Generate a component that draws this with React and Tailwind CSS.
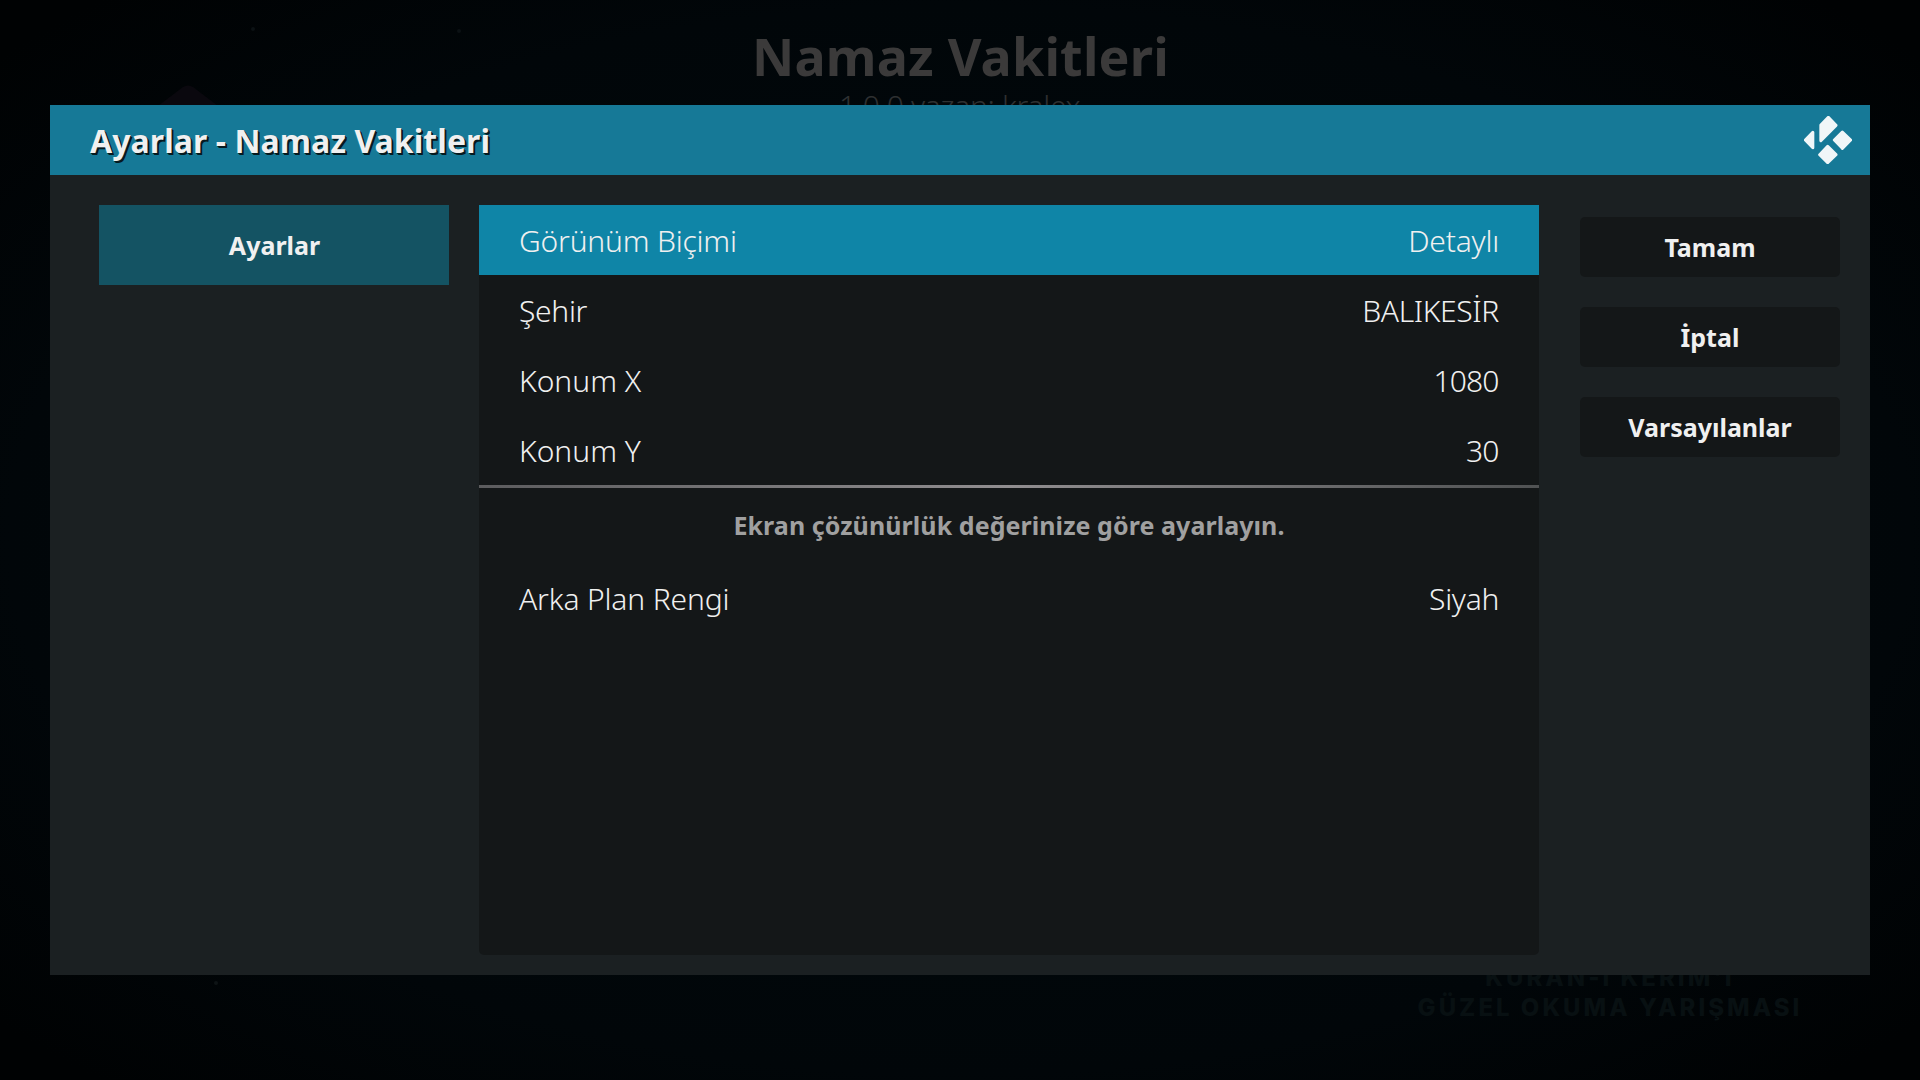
const SETTINGS = [
  { label: "Görünüm Biçimi", value: "Detaylı", active: true, labelClass: "tracking-[-0.2px]", valueClass: "tracking-[-0.2px]" },
  { label: "Şehir", value: "BALIKESİR", labelClass: "tracking-[-0.3px]", valueClass: "tracking-[-0.35px]" },
  { label: "Konum X", value: "1080", valueClass: "mr-[0.5px] tracking-[-0.9px]" },
  { label: "Konum Y", value: "30", valueClass: "mr-[0.5px] tracking-[-0.9px]" },
];

const ACTIONS = ["Tamam", "İptal", "Varsayılanlar"];

function KodiLogo() {
  return (
    <svg
      viewBox="0 0 144 144"
      className="h-12 w-12 fill-[#f0f6f8] stroke-[#f0f6f8]"
      strokeWidth="9"
      strokeLinejoin="round"
      aria-label="Kodi"
    >
      <path d="M73 4 L96 28 L50.5 74 V27 Z" />
      <path d="M4 72 L26.500 49 V95 Z" />
      <path d="M115 48 L140 72 L115 97 L91 72 Z" />
      <path d="M71 91 L96 116 L71 140 L47 116 Z" />
    </svg>
  );
}

function SettingRow({ label, value, active, labelClass, valueClass }) {
  return (
    <div
      className={
        active
          ? "flex h-[70px] items-center justify-between bg-[#0f85a7] px-10 pt-0.5"
          : "flex h-[70px] items-center justify-between px-10 pt-0.5"
      }
    >
      <span className={labelClass}>{label}</span>
      <span className={valueClass}>{value}</span>
    </div>
  );
}

function Backdrop() {
  return (
    <div className="absolute inset-0 overflow-hidden bg-[radial-gradient(ellipse_at_center,#01080b_40%,#010609_70%,#000203_95%)]">
      <svg className="absolute inset-0 h-full w-full" viewBox="0 0 1920 1080">
        <path d="M158 106 L183 87 Q188 84 193 87 L218 106 Z" fill="#0a080e" />
        <circle cx="253" cy="29" r="2" fill="#0b1114" />
        <circle cx="459" cy="31" r="2" fill="#0b1114" />
        <circle cx="216" cy="983" r="2" fill="#0d1315" />
      </svg>
      <h1 className="absolute top-[30px] left-[752px] text-[52px] leading-[52px] font-bold tracking-[0.2px] whitespace-nowrap text-[#3b3a3a]">
        Namaz Vakitleri
      </h1>
      <p className="absolute top-[91px] left-[839px] text-[30px] leading-[30px] font-light tracking-[-0.3px] whitespace-nowrap text-[#2e3031]">
        1.0.0 yazan: kralex
      </p>
      <div className="absolute top-[963px] left-[1400px] w-[420px] text-center font-[Inter,sans-serif] text-[24px] leading-[30px] font-extrabold tracking-[3px] whitespace-nowrap text-[#081012]">
        <p>KURAN-I KERİM&apos;İ</p>
        <p>GÜZEL OKUMA YARIŞMASI</p>
      </div>
    </div>
  );
}

export default function App() {
  return (
    <div className="relative flex h-[1080px] w-[1920px] overflow-hidden bg-black px-[50px] pt-[105px] font-['Noto_Sans',sans-serif]">
      <Backdrop />
      <section className="relative flex h-[870px] w-[1820px] flex-col bg-[#1b2022]">
        <header className="flex h-[70px] shrink-0 items-center justify-between bg-[#167997] pr-[18px] pl-10">
          <h2 className="pt-0.5 text-[32px] leading-[44px] font-bold tracking-[0.06px] text-[#f0f0f0] [text-shadow:1px_1px_0_#061a20,2px_2px_0_#061a20]">
            Ayarlar - Namaz Vakitleri
          </h2>
          <KodiLogo />
        </header>
        <div className="flex pt-[30px] pl-[49px]">
          <nav className="w-[350px]">
            <button className="flex h-20 w-full items-center justify-center bg-[#145363] pt-0.5 pl-px text-[25px] font-bold text-[#f0f0f0]">
              Ayarlar
            </button>
          </nav>
          <main className="ml-[30px] h-[750px] w-[1060px] rounded-b-[5px] bg-[#141718] text-[30px] leading-[42px] font-light text-[#f0f0f0]">
            {SETTINGS.map((s) => (
              <SettingRow key={s.label} {...s} />
            ))}
            <div className="h-[3px] bg-linear-to-r from-[#5c5c5e] via-[#918e90] to-[#505253]" />
            <p className="flex h-[75px] items-center justify-center pb-0.5 text-[25px] font-bold tracking-[0.07px] text-[#a0a0a0]">
              Ekran çözünürlük değerinize göre ayarlayın.
            </p>
            <SettingRow
              label="Arka Plan Rengi"
              value="Siyah"
              labelClass="tracking-[-0.15px]"
              valueClass="tracking-[-0.3px]"
            />
          </main>
          <aside className="mt-3 ml-[41px] flex w-[260px] flex-col gap-[30px]">
            {ACTIONS.map((a) => (
              <button
                key={a}
                className="flex h-[60px] items-center justify-center rounded-[5px] bg-[#141718] pt-0.5 text-[25px] font-bold text-[#f0f0f0]"
              >
                {a}
              </button>
            ))}
          </aside>
        </div>
      </section>
    </div>
  );
}
